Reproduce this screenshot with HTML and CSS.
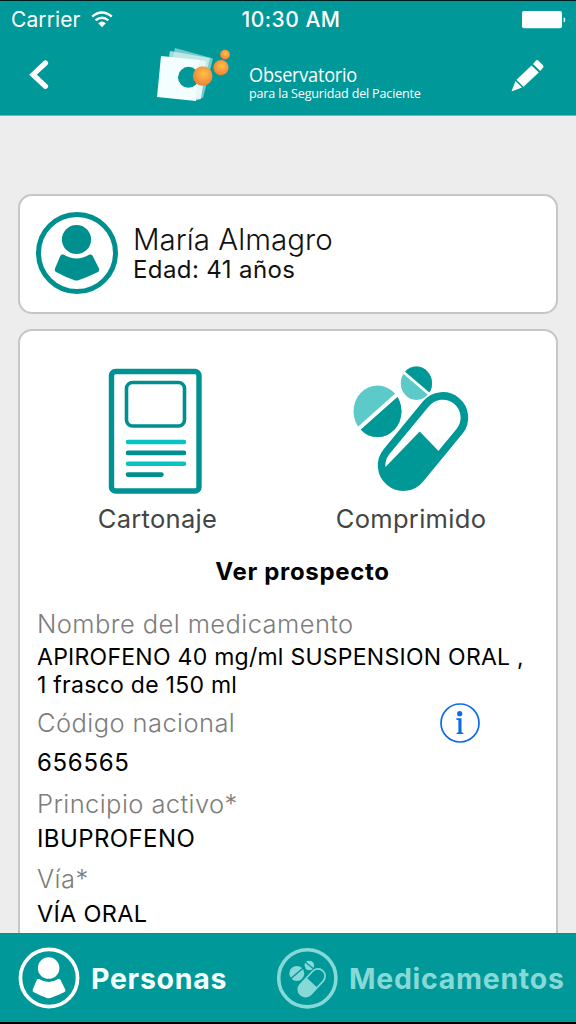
FILE: index.html
```html
<!DOCTYPE html>
<html lang="es">
<head>
<meta charset="utf-8">
<title>Observatorio para la Seguridad del Paciente</title>
<link rel="stylesheet" href="styles.css">
</head>
<body>
<div class="screen">
  <header class="header">
    <div class="status">
      <div class="carrier"><span class="carrier-name">Carrier</span>
        <svg class="wifi" width="22" height="17" viewBox="0 0 22 17"><g fill="none" stroke="#fff" stroke-width="2.4"><path d="M1.2 5.6Q11 -2.6 20.8 5.6"/><path d="M4.6 9.3Q11 4 17.4 9.3"/></g><path d="M7.2 12.2Q11 9 14.8 12.2L11 16.3z" fill="#fff"/></svg>
      </div>
      <span class="clock">10:30 AM</span>
      <svg class="battery" width="46" height="18" viewBox="0 0 46 18"><rect x="0" y="0" width="40" height="17.3" rx="2" fill="#fff"/><path d="M41.600 6.500h.8q1.800 2.200 0 4.800h-.8z" fill="#fff"/></svg>
    </div>
    <div class="nav">
      <svg class="back" width="20" height="30" viewBox="29 60 20 30"><path d="M45.500 63L33 74.700 45.500 86.300" fill="none" stroke="#fff" stroke-width="5.200" stroke-linecap="round" stroke-linejoin="miter"/></svg>
      <div class="brand">
        <svg width="76" height="56" viewBox="156 49 76 56">
          <defs>
            <radialGradient id="orb" cx=".55" cy=".4" r=".6"><stop offset="0" stop-color="#ffc33a"/><stop offset=".5" stop-color="#f8a043"/><stop offset="1" stop-color="#ee8136"/></radialGradient>
          </defs>
          <path d="M175 50L213 60.500 203 100 166 94z" fill="#b5e3e3" opacity=".65"/>
          <path d="M170 53L210 60 200 101 162 98z" fill="#d7f1f1" opacity=".75"/>
          <path d="M161 58L200 62 196 103 157 99z" fill="#f5fefe"/>
          <path d="M200 62L206 63 201 101 196 102z" fill="#e9f8f8" opacity=".9"/>
          <circle cx="188.500" cy="79.300" r="10.500" fill="#009899"/>
          <circle cx="202.700" cy="78" r="9.800" fill="url(#orb)"/>
          <circle cx="221" cy="69.700" r="7.600" fill="url(#orb)"/>
          <circle cx="225" cy="56.600" r="4.900" fill="url(#orb)"/>
        </svg>
        <div class="brand-text"><div class="brand-name">Observatorio</div><div class="brand-sub">para la Seguridad del Paciente</div></div>
      </div>
      <svg class="edit" width="34" height="34" viewBox="510 57 34 34"><g fill="#fff"><path d="M511.500 90.500L515.500 80 522 86.500z"/><path d="M516.500 78.800L531.500 64.500 538.800 71.500 523.500 85.800z"/><path d="M533 63L535.500 60Q537 58.300 538.500 59.800L543 64.200Q544 65.500 543 66.700L540.200 69.900z"/></g></svg>
    </div>
  </header>

  <main class="content">
    <section class="card person">
      <svg class="avatar" width="84" height="84" viewBox="0 0 84 84"><circle cx="42" cy="42" r="38.500" fill="none" stroke="#008f8f" stroke-width="5"/><g fill="#008f8f"><circle cx="41.500" cy="28.500" r="14.600"/><path d="M25.500 44.500Q26.500 43 28.500 43.500Q41.500 51.500 54.500 43.500Q56.500 43 57.500 44.500L64 57.500Q65 60 62.500 61.300Q53 66 44 69Q41.500 70 39 69Q30 66 21.500 61.300Q19 60 20 57.500z"/></g></svg>
      <div class="person-text"><div class="name"><span>María Almagro</span></div><div class="age"><span>Edad: 41 años</span></div></div>
    </section>

    <section class="card medicine">
      <div class="formats">
        <div class="format format-box">
          <svg width="96" height="128" viewBox="107 367 96 128"><g fill="none"><rect x="111.500" y="371.500" width="87.500" height="119.500" rx="4" stroke="#009292" stroke-width="5.400"/><rect x="126.500" y="382.500" width="58" height="43.500" rx="6" stroke="#008f8f" stroke-width="3.600"/><g stroke-width="4.600" stroke-linecap="round"><path d="M128 442H184M128 463.700H184" stroke="#05c4c3"/><path d="M128 452.900H184M128 474.600H161.500" stroke="#008f8f"/></g></g></svg>
          <span class="format-name cartonaje">Cartonaje</span>
        </div>
        <div class="format format-pill">
          <svg width="118" height="128" viewBox="352 365 118 128">
            <defs>
              <clipPath id="lower"><path d="M351 437L407 388V445H351z"/></clipPath>
              <clipPath id="upper"><path d="M400 367.500L436 399V360H400z"/></clipPath>
            </defs>
            <ellipse cx="377.500" cy="411.300" rx="24" ry="25.800" fill="#5ccac8"/>
            <ellipse cx="377.500" cy="411.300" rx="24" ry="25.800" fill="#009896" clip-path="url(#lower)"/>
            <path d="M351 435.500L405 387.500" stroke="#fff" stroke-width="4"/>
            <ellipse cx="416.400" cy="383.300" rx="15.600" ry="16.700" fill="#5ccac8"/>
            <ellipse cx="416.400" cy="383.300" rx="15.600" ry="16.700" fill="#009896" clip-path="url(#upper)"/>
            <path d="M400 369.200L434 398.300" stroke="#fff" stroke-width="2.800"/>
            <rect x="401.300" y="388.800" width="43.400" height="105.400" rx="21.700" transform="rotate(39.500 423 441.500)" fill="#fff" stroke="#009896" stroke-width="7.600"/>
            <path d="M384.500 468L419.700 431.500 440 452.500 420 479 404 488 387 481z" fill="#009896"/>
          </svg>
          <span class="format-name comprimido">Comprimido</span>
        </div>
      </div>
      <div class="leaflet"><span>Ver prospecto</span></div>
      <dl class="details">
        <dt class="label l-name"><span>Nombre del medicamento</span></dt>
        <dd class="value v-name"><span>APIROFENO 40 mg/ml SUSPENSION ORAL ,</span><br><span>1 frasco de 150 ml</span></dd>
        <dt class="label l-code"><span>Código nacional</span><svg class="info" width="42" height="42" viewBox="0 0 42 42"><circle cx="21" cy="21" r="19" fill="none" stroke="#0b6bea" stroke-width="1.700"/><g fill="#0b6bea"><circle cx="20.700" cy="11.700" r="2.600"/><path d="M17.200 16.200H22.500V30.300L24.400 30.900V32H17.500V30.900L19.400 30.300V18.200L17.200 17.600z"/></g></svg></dt>
        <dd class="value v-code"><span>656565</span></dd>
        <dt class="label l-active"><span>Principio activo*</span></dt>
        <dd class="value v-active"><span>IBUPROFENO</span></dd>
        <dt class="label l-route"><span>Vía*</span></dt>
        <dd class="value v-route"><span>VÍA ORAL</span></dd>
      </dl>
    </section>
  </main>

  <nav class="tabs">
    <div class="tab tab-people">
      <svg width="62" height="62" viewBox="0 0 84 84"><circle cx="42" cy="42" r="38.700" fill="none" stroke="#fff" stroke-width="5"/><g fill="#fff"><circle cx="41.500" cy="28.500" r="14.600"/><path d="M25.500 44.500Q26.500 43 28.500 43.500Q41.500 51.500 54.500 43.500Q56.500 43 57.500 44.500L64 57.500Q65 60 62.500 61.300Q53 66 44 69Q41.500 70 39 69Q30 66 21.500 61.300Q19 60 20 57.500z"/></g></svg>
      <span class="personas">Personas</span>
    </div>
    <div class="tab tab-meds">
      <svg width="62" height="62" viewBox="276 947 62 62"><circle cx="307.300" cy="978.300" r="28.600" fill="none" stroke="#87d9d7" stroke-width="3.600"/><g fill="#87d9d7"><circle cx="296.800" cy="973.400" r="7.500"/><circle cx="309.300" cy="965.500" r="4.800"/></g><g stroke="#009899"><path d="M288.500 980.500L305 966.500" stroke-width="1.600"/><path d="M304 961L315 970" stroke-width="1.200"/></g><g transform="rotate(43 311.700 982.800)"><rect x="304.500" y="966.500" width="14.400" height="32.600" rx="7.200" fill="#009899" stroke="#87d9d7" stroke-width="1.700"/><path d="M304.500 982.500H318.900V991.900A7.200 7.200 0 0 1 304.500 991.900z" fill="#87d9d7"/></g></svg>
      <span class="medicamentos">Medicamentos</span>
    </div>
  </nav>
</div>
</body>
</html>
```
FILE: styles.css
```css
* { box-sizing: border-box; }
body { margin: 0; background: #000; }
.screen {
  width: 576px; height: 1024px; overflow: hidden;
  display: flex; flex-direction: column;
  border-top: 1px solid #001b1b; border-bottom: 2px solid #000;
  background: #ededed; color: #111;
  font-family: Inter, "Liberation Sans", sans-serif;
}
span { white-space: nowrap; }
.header { height: 115px; flex: none; background: #009899; border-bottom: 1px solid #6fb5b3; color: #fff; }
.status { height: 37px; display: grid; grid-template-columns: 1fr auto 1fr; align-items: center; padding: 0 8px 0 11px; font-size: 21px; }
.carrier { display: flex; align-items: center; gap: 10px; }
.carrier-name { letter-spacing: .1px; }
.wifi { margin-bottom: 1px; }
.clock { font-weight: 500; letter-spacing: .5px; margin-left: 3px; }
.battery { justify-self: end; }
.nav { height: 74px; display: flex; align-items: center; padding: 0 32px 0 29px; }
.brand { display: flex; align-items: center; margin-left: 107px; gap: 17px; }
.edit { margin-left: auto; }
.brand-text { font-family: "Open Sans", "Noto Sans", sans-serif; width: 172px; padding-top: 15px; white-space: nowrap; }
.brand-name { font-size: 20px; line-height: 20px; letter-spacing: -.3px; transform: scaleX(.91); transform-origin: left; }
.brand-sub { font-size: 13.500px; line-height: 16px; letter-spacing: -.2px; transform: scaleX(.932); transform-origin: left; }

.content { flex: 1; min-height: 0; overflow: hidden; padding: 78px 18px 0; }
.card { background: #fff; border: 2px solid #c6c6c6; border-radius: 14px; }
.person { height: 120px; display: flex; align-items: flex-start; padding: 15px 0 0 15px; margin-bottom: 15px; }
.person-text { padding: 11px 0 0 14px; }
.name { font-size: 29.500px; line-height: 34px; font-weight: 350; letter-spacing: .05px; }
.age { font-size: 24px; line-height: 28px; letter-spacing: .4px; }
.medicine { height: 720px; padding: 34px 17px 0; }
.formats { display: flex; height: 171px; }
.format { display: flex; flex-direction: column; align-items: center; flex: none; }
.format-box { width: 235px; padding-top: 2px; }
.format-pill { width: 277px; }
.format-pill svg { margin-bottom: 2px; }
.format-name { font-size: 25.500px; line-height: 30px; margin-top: 9px; color: #444; letter-spacing: .3px; }
.cartonaje { padding-left: 6px; }
.comprimido { padding-left: 1px; }
.leaflet { font-size: 24px; line-height: 30px; font-weight: 700; text-align: center; margin-top: 21px; padding-left: 29px; color: #000; letter-spacing: .68px; }
.details { margin: 22px 0 0; }
.label { font-size: 25.500px; line-height: 30px; color: #7d7d7d; font-weight: 350; letter-spacing: .42px; }
.value { margin: 0; font-size: 23px; line-height: 28px; color: #000; letter-spacing: .26px; }
.v-name { margin-top: 4px; }
.l-code { margin-top: 9px; display: flex; justify-content: space-between; align-items: center; height: 30px; padding-right: 58px; }
.v-code { margin-top: 11px; font-size: 24px; letter-spacing: .7px; }
.l-active { margin-top: 12px; }
.v-active { margin-top: 6px; font-size: 24px; letter-spacing: .4px; }
.l-route { margin-top: 11px; }
.v-route { margin-top: 6px; font-size: 23.500px; letter-spacing: .3px; }

.tabs { height: 89px; flex: none; display: flex; align-items: center; background: #009899; border-top: 1px solid #108a8a; font-size: 28.500px; font-weight: 700; color: #f4ffff; letter-spacing: .7px; }
.tab { display: flex; align-items: center; gap: 11px; }
.tab-people { width: 276px; padding-left: 18px; }
.tab-meds { color: #87d9d7; }
```
